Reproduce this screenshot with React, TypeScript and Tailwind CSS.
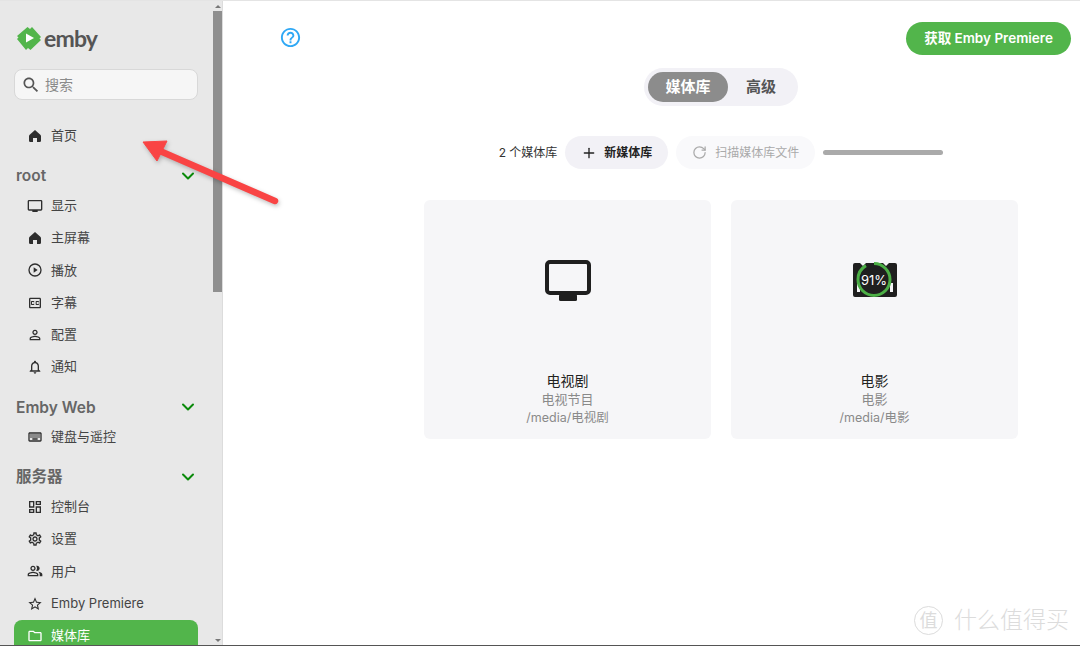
import { ChevronDown, Plus, RotateCw } from "lucide-react";

const font = "font-['Inter','Noto_Sans_CJK_SC',sans-serif]";

const paths: Record<string, string> = {
  home: "M12 3 L20 10 Q21 11 21 12 V19 Q21 21 19 21 H15 V15 H9 V21 H5 Q3 21 3 19 V12 Q3 11 4 10 Z",
  tv: "M21 3H3c-1.100 0-2 .9-2 2v12c0 1.100.9 2 2 2h5v2h8v-2h5c1.100 0 2-.9 2-2V5c0-1.100-.9-2-2-2zm0 14H3V5h18v12z",
  play: "M12 2a10 10 0 1 0 0 20 10 10 0 0 0 0-20zm0 18a8 8 0 1 1 0-16 8 8 0 0 1 0 16zM10 8v8l6-4z",
  cc: "M19 4H5c-1.110 0-2 .9-2 2v12c0 1.100.89 2 2 2h14c1.100 0 2-.9 2-2V6c0-1.100-.9-2-2-2zm0 14H5V6h14v12zM7 15h3c.55 0 1-.45 1-1v-1H9.500v.5h-2v-3h2v.5H11v-1c0-.55-.45-1-1-1H7c-.55 0-1 .45-1 1v4c0 .55.45 1 1 1zm7 0h3c.55 0 1-.45 1-1v-1h-1.500v.5h-2v-3h2v.5H18v-1c0-.55-.45-1-1-1h-3c-.55 0-1 .45-1 1v4c0 .55.45 1 1 1z",
  person: "M12 5.900c1.160 0 2.100.94 2.100 2.100s-.94 2.100-2.100 2.100S9.900 9.160 9.900 8s.94-2.100 2.100-2.100m0 9c2.970 0 6.100 1.460 6.100 2.100v1.100H5.900V17c0-.64 3.130-2.100 6.100-2.100M12 4C9.790 4 8 5.790 8 8s1.790 4 4 4 4-1.790 4-4-1.790-4-4-4zm0 9c-2.670 0-8 1.340-8 4v3h16v-3c0-2.660-5.330-4-8-4z",
  bell: "M12 22c1.100 0 2-.9 2-2h-4c0 1.100.9 2 2 2zm6-6v-5c0-3.070-1.630-5.640-4.500-6.320V4c0-.83-.67-1.500-1.500-1.500s-1.500.67-1.500 1.500v.68C7.640 5.360 6 7.920 6 11v5l-2 2v1h16v-1l-2-2zm-2 1H8v-6c0-2.480 1.510-4.500 4-4.500s4 2.020 4 4.500v6z",
  keyboard: "M20 7v10H4V7h16m0-2H4c-1.100 0-1.990.9-1.990 2L2 17c0 1.100.9 2 2 2h16c1.100 0 2-.9 2-2V7c0-1.100-.9-2-2-2zm-9 3h2v2h-2zm0 3h2v2h-2zM8 8h2v2H8zm0 3h2v2H8zm-3 0h2v2H5zm0-3h2v2H5zm3 6h8v2H8zm6-3h2v2h-2zm0-3h2v2h-2zm3 3h2v2h-2zm0-3h2v2h-2z",
  dashboard: "M19 5v2h-4V5h4M9 5v6H5V5h4m10 8v6h-4v-6h4M9 17v2H5v-2h4M21 3h-8v6h8V3zM11 3H3v10h8V3zm10 8h-8v10h8V11zm-10 4H3v6h8v-6z",
  settings: "M19.430 12.980c.04-.32.07-.64.07-.98 0-.34-.03-.66-.07-.98l2.110-1.650c.19-.15.24-.42.12-.64l-2-3.460c-.09-.16-.26-.25-.44-.25-.06 0-.12.01-.17.03l-2.490 1c-.52-.4-1.080-.73-1.690-.98l-.38-2.650C14.460 2.180 14.250 2 14 2h-4c-.25 0-.46.18-.49.42l-.38 2.650c-.61.25-1.170.59-1.690.98l-2.490-1c-.06-.02-.12-.03-.18-.03-.17 0-.34.09-.43.25l-2 3.460c-.13.22-.07.49.12.64l2.110 1.650c-.04.32-.07.65-.07.98 0 .33.03.66.07.98l-2.110 1.650c-.19.15-.24.42-.12.64l2 3.460c.09.16.26.25.44.25.06 0 .12-.01.17-.03l2.490-1c.52.4 1.080.73 1.690.98l.38 2.650c.03.24.24.42.49.42h4c.25 0 .46-.18.49-.42l.38-2.650c.61-.25 1.170-.59 1.690-.98l2.490 1c.06.02.12.03.18.03.17 0 .34-.09.43-.25l2-3.460c.12-.22.07-.49-.12-.64l-2.110-1.650zm-1.980-1.710c.04.31.05.52.05.73 0 .21-.02.43-.05.73l-.14 1.130.89.7 1.080.84-.7 1.210-1.270-.51-1.040-.42-.9.68c-.43.32-.84.56-1.250.73l-1.060.43-.16 1.130-.2 1.350h-1.400l-.19-1.350-.16-1.130-1.060-.43c-.43-.18-.83-.41-1.230-.71l-.91-.7-1.060.43-1.270.51-.7-1.210 1.080-.84.89-.7-.14-1.130c-.03-.31-.05-.54-.05-.74s.02-.43.05-.73l.14-1.130-.89-.7-1.080-.84.7-1.210 1.270.51 1.040.42.9-.68c.43-.32.84-.56 1.250-.73l1.060-.43.16-1.130.2-1.350h1.390l.19 1.350.16 1.130 1.060.43c.43.18.83.41 1.230.71l.91.7 1.060-.43 1.270-.51.7 1.210-1.070.85-.89.7.14 1.130zM12 8c-2.210 0-4 1.790-4 4s1.790 4 4 4 4-1.790 4-4-1.790-4-4-4zm0 6c-1.100 0-2-.9-2-2s.9-2 2-2 2 .9 2 2-.9 2-2 2z",
  people: "M16.670 13.130C18.040 14.060 19 15.320 19 17v3h4v-3c0-2.180-3.570-3.470-6.330-3.870zM15 12c2.210 0 4-1.790 4-4s-1.790-4-4-4c-.47 0-.91.1-1.330.24C14.500 5.270 15 6.580 15 8s-.5 2.730-1.330 3.760c.42.14.86.24 1.330.24zM9 12c2.210 0 4-1.790 4-4s-1.790-4-4-4-4 1.790-4 4 1.790 4 4 4zm0-6c1.100 0 2 .9 2 2s-.9 2-2 2-2-.9-2-2 .9-2 2-2zM9 13c-2.670 0-8 1.340-8 4v3h16v-3c0-2.660-5.330-4-8-4zm6 5H3v-.99C3.200 16.290 6.300 15 9 15s5.800 1.290 6 2v1z",
  star: "M22 9.240l-7.190-.62L12 2 9.190 8.630 2 9.240l5.460 4.730L5.820 21 12 17.270 18.180 21l-1.630-7.030L22 9.240zM12 15.400l-3.760 2.270 1-4.280-3.320-2.880 4.380-.38L12 6.100l1.710 4.040 4.380.38-3.320 2.880 1 4.280L12 15.400z",
  folder: "M20 6h-8l-2-2H4c-1.100 0-1.990.9-1.990 2L2 18c0 1.100.9 2 2 2h16c1.100 0 2-.9 2-2V8c0-1.100-.9-2-2-2zm0 12H4V6h5.170l2 2H20v10z",
};

const NavIcon = ({ name }: { name: string }) => (
  <svg viewBox="0 0 24 24" className="w-[16px] h-[16px] shrink-0 fill-current">
    <path d={paths[name]} />
  </svg>
);

const NavItem = ({ icon, label, active }: { icon: string; label: string; active?: boolean }) => (
  <div
    className={`h-[32.25px] shrink-0 ml-[14px] mr-[15px] pl-[13px] flex items-center gap-[8px] rounded-t-[8px] text-[13px] ${
      active ? "bg-[#52b54b] text-white" : "text-[#2e2e2e]"
    }`}
  >
    <NavIcon name={icon} />
    <span className={active ? "text-white" : "text-[#444]"}>{label}</span>
  </div>
);

const NavHeader = ({ label }: { label: string }) => (
  <div className="h-[27.6px] mt-[10px] shrink-0 pl-[16px] pr-[15px] flex items-center justify-between">
    <span className="text-[15.5px] font-semibold text-[#666]">{label}</span>
    <ChevronDown className="w-[20px] h-[20px] text-[#0a8a0a]" strokeWidth={2.4} />
  </div>
);

const Sidebar = () => (
  <aside className="w-[223px] h-full shrink-0 flex bg-[#e8e8e8] border-r border-[#dcdcdc]">
    <div className="w-[213px] flex flex-col overflow-hidden">
      <div className="h-[68px] shrink-0 pl-[17px] pt-[25px] flex items-start gap-[3px]">
        <svg viewBox="0 0 24 24" className="w-[24px] h-[24px]">
          <path d="M10.500 1 L13 3 L15 1 L24 11 L22.500 12.500 L24 14 L13.500 24 L11 22 L9 24 L0 13 L1.500 11.500 L0 10 Z" fill="#52b54b" />
          <path d="M9 7.500 L17 12 L9 16.500 Z" fill="#fff" />
        </svg>
        <span className="text-[23px] leading-[25px] font-['Lato',sans-serif] font-bold text-[#555] tracking-[-0.8px]">emby</span>
      </div>
      <div className="h-[31px] shrink-0 ml-[14px] mr-[15px] px-[6px] flex items-center gap-[4px] rounded-[8px] border border-[#d8d8d8] bg-[#f6f6f6]">
        <svg viewBox="0 0 24 24" className="w-[20px] h-[20px] fill-[#555]">
          <path d="M15.500 14h-.79l-.28-.27C15.410 12.590 16 11.110 16 9.500 16 5.910 13.090 3 9.500 3S3 5.910 3 9.500 5.910 16 9.500 16c1.610 0 3.090-.59 4.230-1.570l.27.28v.79l5 4.990L20.490 19l-4.990-5zm-6 0C7.010 14 5 11.990 5 9.500S7.010 5 9.500 5 14 7.010 14 9.500 11.990 14 9.500 14z" />
        </svg>
        <span className="text-[14px] text-[#8a8a8a]">搜索</span>
      </div>
      <div className="h-[20px] shrink-0" />
      <NavItem icon="home" label="首页" />
      <NavHeader label="root" />
      <NavItem icon="tv" label="显示" />
      <NavItem icon="home" label="主屏幕" />
      <NavItem icon="play" label="播放" />
      <NavItem icon="cc" label="字幕" />
      <NavItem icon="person" label="配置" />
      <NavItem icon="bell" label="通知" />
      <NavHeader label="Emby Web" />
      <NavItem icon="keyboard" label="键盘与遥控" />
      <NavHeader label="服务器" />
      <NavItem icon="dashboard" label="控制台" />
      <NavItem icon="settings" label="设置" />
      <NavItem icon="people" label="用户" />
      <NavItem icon="star" label="Emby Premiere" />
      <NavItem icon="folder" label="媒体库" active />
    </div>
    <div className="w-[9px] flex flex-col items-center">
      <div className="h-[10px] flex items-center justify-center text-[#777]">
        <svg viewBox="0 0 8 4" className="w-[6px] h-[3px] fill-current"><path d="M4 0l4 4H0z" /></svg>
      </div>
      <div className="w-full h-[281px] bg-[#8f8f8f]" />
      <div className="flex-1" />
      <div className="h-[10px] flex items-center justify-center text-[#777]">
        <svg viewBox="0 0 8 4" className="w-[6px] h-[3px] fill-current"><path d="M0 0h8L4 4z" /></svg>
      </div>
    </div>
  </aside>
);

const TvGlyph = () => (
  <svg viewBox="0 0 46 41" className="w-[46px] h-[41px]">
    <rect x="2" y="2" width="42" height="31" rx="3" fill="none" stroke="#1f1f1f" strokeWidth="4" />
    <rect x="14" y="34" width="18" height="7" rx="1.500" fill="#1f1f1f" />
  </svg>
);

const MovieGlyph = () => (
  <div className="relative w-[46px] h-[38px]">
    <svg viewBox="0 0 46 38" className="w-[46px] h-[38px]">
      <path d="M3 2h5l3 3 3-3h17l3 3 3-3h6q2 0 2 2v30q0 2-2 2H3q-2 0-2-2V4q0-2 2-2z" fill="#1f1f1f" />
      <rect x="5" y="22" width="3" height="9" fill="#f6f6f8" />
      <rect x="38" y="22" width="3" height="9" fill="#f6f6f8" />
      <circle cx="22" cy="18.500" r="15.500" fill="#1f1f1f" />
      <circle cx="22" cy="18.500" r="16" fill="none" stroke="#4caf46" strokeWidth="3" strokeDasharray="91.500 9" transform="rotate(-90 22 18.500)" />
    </svg>
    <span className="absolute left-0 w-[45px] top-[11px] text-center text-[13px] leading-[16px] text-white">91%</span>
  </div>
);

const LibraryCard = ({ name, type, path, icon }: { name: string; type: string; path: string; icon: React.ReactNode }) => (
  <div className="w-[287px] h-[239px] rounded-[6px] bg-[#f6f6f8] flex flex-col items-center">
    <div className="h-[171px] shrink-0 pb-[11px] flex items-center justify-center">{icon}</div>
    <div className="text-[14px] leading-[19px] text-[#222]">{name}</div>
    <div className="text-[13px] leading-[19px] text-[#8a8a8a]">{type}</div>
    <div className="text-[12.5px] leading-[18px] text-[#8a8a8a]">{path}</div>
  </div>
);

export default function App() {
  return (
    <div className={`${font} relative w-[1080px] h-[646px] overflow-hidden bg-white border-t border-[#e4e4e4] border-b border-b-[#555] flex`}>
      <Sidebar />
      <main className="flex-1 flex flex-col">
        <div className="flex items-start justify-between pt-[21px] pl-[56px] pr-[9px] h-[67px] shrink-0">
          <svg viewBox="0 0 24 24" className="w-[23px] h-[23px] mt-[4px] fill-[#2fa8f5]">
            <path d="M11 18h2v-2h-2v2zm1-16C6.480 2 2 6.480 2 12s4.480 10 10 10 10-4.480 10-10S17.520 2 12 2zm0 18c-4.410 0-8-3.590-8-8s3.590-8 8-8 8 3.590 8 8-3.590 8-8 8zm0-14c-2.210 0-4 1.790-4 4h2c0-1.100.9-2 2-2s2 .9 2 2c0 2-3 1.750-3 5h2c0-2.250 3-2.500 3-5 0-2.210-1.790-4-4-4z" />
          </svg>
          <div className="w-[165px] h-[33px] rounded-full bg-[#52b54b] text-white text-[13.5px] font-semibold flex items-center justify-center">
            获取 Emby Premiere
          </div>
        </div>
        <div className="w-[594px] ml-[201px] flex flex-col items-center">
          <div className="w-[154px] h-[38px] rounded-full bg-[#f2f1f6] px-[4px] flex items-center">
            <div className="w-[80px] h-[30px] rounded-full bg-[#8c8c8c] text-white text-[15px] font-semibold flex items-center justify-center">媒体库</div>
            <div className="flex-1 text-center text-[15px] font-semibold text-[#555]">高级</div>
          </div>
          <div className="mt-[30px] flex items-center text-[12px]">
            <span className="text-[#333] mr-[8px]">2 个媒体库</span>
            <div className="w-[103px] h-[33px] rounded-full bg-[#f2f1f6] flex items-center justify-center gap-[7px] text-[#222] font-semibold">
              <Plus className="w-[16px] h-[16px]" strokeWidth={2} />
              新媒体库
            </div>
            <div className="ml-[8px] w-[139px] h-[33px] rounded-full bg-[#f9f9fb] flex items-center justify-center gap-[8px] text-[#aaa]">
              <RotateCw className="w-[15px] h-[15px]" strokeWidth={2} />
              扫描媒体库文件
            </div>
            <div className="ml-[8px] w-[120px] h-[5px] rounded-full bg-[#aaaaaa]" />
          </div>
          <div className="mt-[31px] flex gap-[20px]">
            <LibraryCard name="电视剧" type="电视节目" path="/media/电视剧" icon={<TvGlyph />} />
            <LibraryCard name="电影" type="电影" path="/media/电影" icon={<MovieGlyph />} />
          </div>
        </div>
      </main>

      {/* annotation arrow */}
      <svg className="absolute left-0 top-0 w-[300px] h-[220px] pointer-events-none" viewBox="0 0 300 220">
        <g fill="#f94444" stroke="#f94444" style={{ filter: "drop-shadow(1px 2px 2px rgba(0,0,0,0.25))" }}>
          <path d="M143 141 L167 140 L157 160 Z" strokeWidth="1" strokeLinejoin="round" />
          <path d="M160 150 L275 200" strokeWidth="6.500" strokeLinecap="round" />
        </g>
      </svg>

      {/* watermark */}
      <div className="absolute left-[914px] top-[604px] flex items-center gap-[11px] text-[#dcdcdc] pointer-events-none">
        <div className="w-[29px] h-[29px] rounded-full border border-[#dcdcdc] flex items-center justify-center text-[18px]">值</div>
        <span className="text-[23px] leading-[30px] font-light">什么值得买</span>
      </div>
    </div>
  );
}
